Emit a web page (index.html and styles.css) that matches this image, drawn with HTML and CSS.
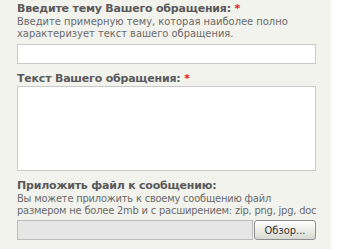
FILE: index.html
```html
<!DOCTYPE html>
<html lang="ru">

<head>
    <meta charset="UTF-8">
    <meta name="viewport" content="width=device-width, initial-scale=1.0">
    <title>Обращение</title>
    <link rel="stylesheet" href="styles.css">
</head>

<body>
    <div class="panel">
        <!-- Тема -->
        <div class="field">
            <label for="subject">Введите тему Вашего обращения: <span class="req">*</span></label>
            <div class="hint">Введите примерную тему, которая наиболее полно<br>характеризует текст вашего обращения.</div>
            <input type="text" id="subject" class="text-input">
        </div>

        <!-- Текст -->
        <div class="field">
            <label for="message">Текст Вашего обращения: <span class="req">*</span></label>
            <textarea id="message" class="text-area"></textarea>
        </div>

        <!-- Файл -->
        <div class="field">
            <label>Приложить файл к сообщению:</label>
            <div class="hint hint-tight">Вы можете приложить к своему сообщению файл<br>размером не более 2mb и с расширением: zip, png, jpg, doc</div>
            <div class="file-row">
                <div class="file-path"></div>
                <button class="browse-btn">Обзор...</button>
            </div>
        </div>
    </div>
</body>

</html>
```

FILE: styles.css
```css
/* Page */
body {
    margin: 0;
    background-color: #ffffff;
    font-family: 'DejaVu Sans Condensed', 'DejaVu Sans', Tahoma, sans-serif;
    font-size: 11px;
    line-height: 12px;
    color: #666666;
}

.panel {
    width: 299px;
    height: 249px;
    padding: 3px 15px 0 17px;
    box-sizing: content-box;
    background-color: #f3f3ee;
}

/* Fields */
.field {
    margin-bottom: 9px;
}

.field label {
    display: block;
    font-family: 'DejaVu Sans', Tahoma, sans-serif;
    font-weight: bold;
    letter-spacing: -0.2px;
    color: #5a5a5a;
    margin-bottom: 1px;
    white-space: nowrap;
}

.field .req {
    color: #e2192a;
}

.hint {
    color: #6a6a6a;
    margin-bottom: 4px;
    white-space: nowrap;
}

.hint-tight {
    letter-spacing: -0.2px;
    margin-bottom: 3px;
}

.text-input {
    display: block;
    width: 299px;
    height: 20px;
    box-sizing: border-box;
    margin: 0;
    border: 1px solid #c9c9c9;
    background-color: #ffffff;
    padding: 0 3px;
}

.text-area {
    display: block;
    width: 299px;
    height: 85px;
    box-sizing: border-box;
    margin: 1px 0 0;
    border: 1px solid #c9c9c9;
    background-color: #ffffff;
    resize: none;
}

/* File picker */
.file-row {
    display: flex;
    gap: 1px;
    height: 20px;
}

.file-path {
    flex: 1;
    border: 1px solid #bdbdbd;
    background-color: #e6e6e6;
}

.browse-btn {
    width: 62px;
    height: 20px;
    margin: 0;
    padding: 0;
    font-family: 'DejaVu Sans Condensed', 'DejaVu Sans', Tahoma, sans-serif;
    font-size: 11px;
    color: #333333;
    border: 1px solid #8e8e8e;
    border-radius: 3px;
    background: linear-gradient(#ffffff, #e9e9e4 60%, #d8d8d2);
}
```
